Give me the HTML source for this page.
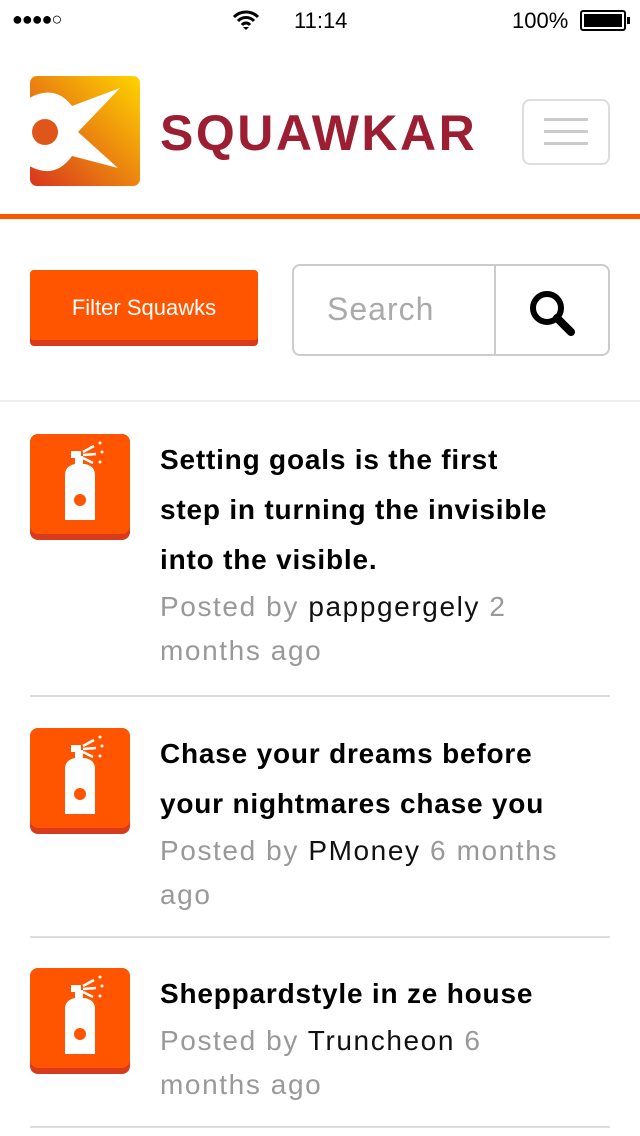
<!DOCTYPE html>
<html><head><meta charset="utf-8"><style>
*{margin:0;padding:0;box-sizing:border-box}
body{width:640px;height:1136px;background:#fff;font-family:"Liberation Sans",sans-serif;position:relative;overflow:hidden;color:#000}
.abs{position:absolute}
.sb{font-size:22px;top:8px}
.icon{position:absolute;left:30px;width:100px;height:106px;border-radius:8px;background:#d83a1c}
.icon .f{position:absolute;left:0;top:0;width:100px;height:100px;border-radius:8px;background:#ff5500}
.item{position:absolute;left:160px;width:470px;white-space:nowrap}
.t{font-weight:bold;font-size:28px;line-height:50px;letter-spacing:0.8px}
.p{font-size:28px;line-height:44px;color:#999;letter-spacing:1.6px}
.p b{font-weight:normal;color:#111}
.hr{position:absolute;left:30px;width:580px;height:2px;background:#ddd}
</style></head><body>
<div class="abs sb" style="left:12px;top:9px;font-size:18px;letter-spacing:-1px">●●●●○</div>
<svg class="abs" style="left:232px;top:9px" width="28" height="22" viewBox="0 0 28 22"><path d="M2 8a17 17 0 0 1 24 0M6 12a11 11 0 0 1 16 0M10 16a5 5 0 0 1 8 0" stroke="#000" stroke-width="3" fill="none"/><path d="M11 18l3 3 3-3z"/></svg>
<div class="abs sb" style="left:294px">11:14</div>
<div class="abs sb" style="left:512px">100%</div>
<div class="abs" style="left:580px;top:10px;width:46px;height:21px;border:2px solid #000;border-radius:3px;padding:2px"><div style="background:#000;width:100%;height:100%"></div></div>
<div class="abs" style="left:627px;top:17px;width:3px;height:7px;background:#000"></div>

<svg class="abs" style="left:30px;top:76px" width="110" height="110" viewBox="0 0 110 110">
<defs><linearGradient id="g" x1="1" y1="0" x2="0" y2="1"><stop offset="0" stop-color="#ffd500"/><stop offset="1" stop-color="#d8361e"/></linearGradient>
<clipPath id="c"><rect width="110" height="110" rx="7"/></clipPath></defs>
<rect width="110" height="110" rx="7" fill="url(#g)"/>
<g clip-path="url(#c)"><path d="M-10 28 Q22 4 42 30 L90 12 L48 56 L88 92 L42 80 Q22 108 -10 84Z" fill="#fff"/>
<circle cx="15" cy="56" r="13" fill="#e0561a"/></g></svg>
<div class="abs" style="left:160px;top:104px;font-size:50px;font-weight:bold;color:#9c1e32;letter-spacing:2.5px">SQUAWKAR</div>
<div class="abs" style="left:522px;top:99px;width:88px;height:66px;border:2px solid #ddd;border-radius:8px"></div>
<div class="abs" style="left:544px;top:118px;width:44px;height:3px;background:#ccc;box-shadow:0 12px 0 #ccc,0 24px 0 #ccc"></div>
<div class="abs" style="left:0;top:214px;width:640px;height:5px;background:#ff5500"></div>

<div class="abs" style="left:30px;top:270px;width:228px;height:76px;background:#d83a1c;border-radius:4px"></div>
<div class="abs" style="left:30px;top:270px;width:228px;height:70px;background:#ff5500;border-radius:4px;color:#fff;font-size:22px;text-align:center;line-height:76px">Filter Squawks</div>
<div class="abs" style="left:292px;top:264px;width:318px;height:92px;border:2px solid #ccc;border-radius:8px"></div>
<div class="abs" style="left:494px;top:265px;width:2px;height:90px;background:#ccc"></div>
<div class="abs" style="left:327px;top:291px;font-size:32px;color:#aaa;letter-spacing:1px">Search</div>
<svg class="abs" style="left:527px;top:288px" width="50" height="50" viewBox="0 0 50 50"><circle cx="20" cy="20" r="14" stroke="#000" stroke-width="6" fill="none"/><path d="M30 30l14 14" stroke="#000" stroke-width="8" stroke-linecap="round"/></svg>
<div class="abs" style="left:0;top:400px;width:640px;height:2px;background:#eee"></div>

<svg width="0" height="0" style="position:absolute"><defs><g id="sp" fill="#fff">
<path d="M35 41 L35 86 L65 86 L65 41 Q65 32 55 30 L45 30 Q35 32 35 41Z"/>
<rect x="45" y="22" width="8" height="9"/><rect x="41" y="17" width="10" height="7"/>
<circle cx="50" cy="66" r="6" fill="#ff5500"/>
<path d="M53 18 L64 12 M53 21 L66 20 M53 24 L63 29" stroke="#fff" stroke-width="2.5"/>
<circle cx="70" cy="9" r="1.5"/><circle cx="72" cy="18" r="1.5"/><circle cx="70" cy="28" r="1.5"/></g></defs></svg>

<div class="icon" style="top:434px"><div class="f"><svg width="100" height="100"><use href="#sp"/></svg></div></div>
<div class="item" style="top:435px"><div class="t">Setting goals is the first<br>step in turning the invisible<br>into the visible.</div><div class="p">Posted by <b>pappgergely</b> 2<br>months ago</div></div>
<div class="hr" style="top:695px"></div>

<div class="icon" style="top:728px"><div class="f"><svg width="100" height="100"><use href="#sp"/></svg></div></div>
<div class="item" style="top:729px"><div class="t">Chase your dreams before<br>your nightmares chase you</div><div class="p">Posted by <b>PMoney</b> 6 months<br>ago</div></div>
<div class="hr" style="top:936px"></div>

<div class="icon" style="top:968px"><div class="f"><svg width="100" height="100"><use href="#sp"/></svg></div></div>
<div class="item" style="top:969px"><div class="t">Sheppardstyle in ze house</div><div class="p">Posted by <b>Truncheon</b> 6<br>months ago</div></div>
<div class="hr" style="top:1126px"></div>
</body></html>
